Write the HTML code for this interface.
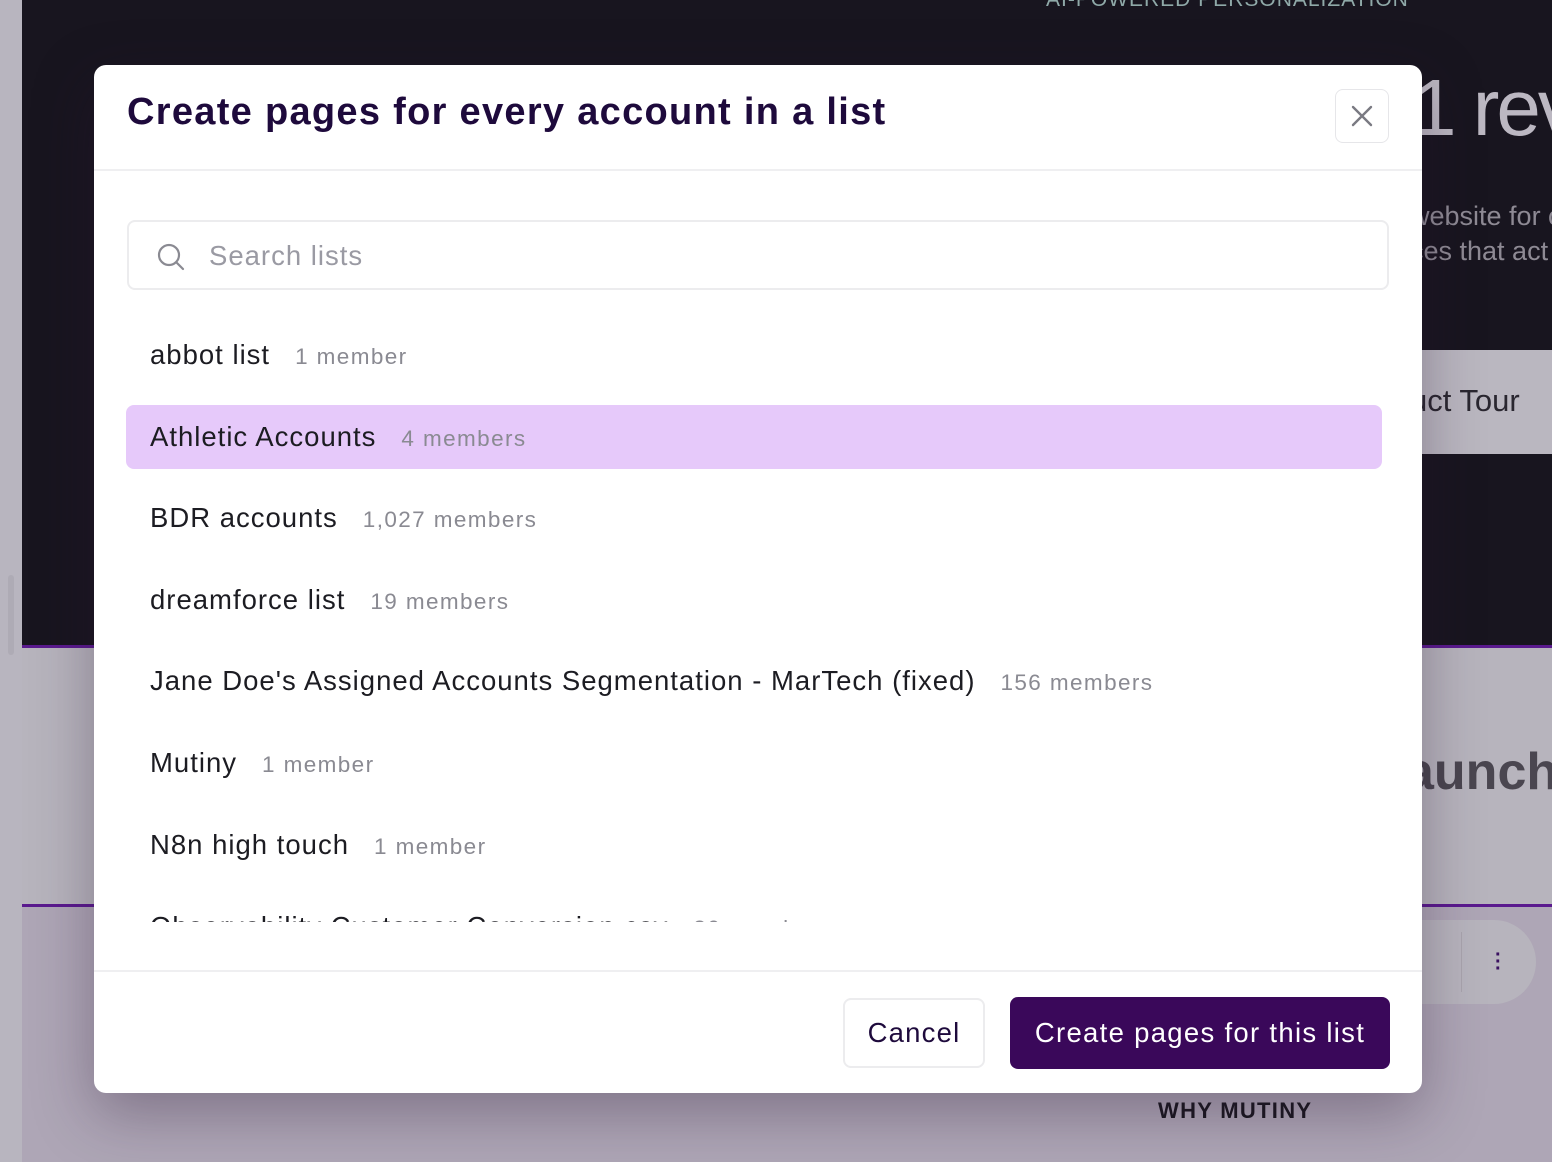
<!DOCTYPE html>
<html><head><meta charset="utf-8"><style>
*{box-sizing:border-box;margin:0;padding:0}
body{width:1552px;height:1162px;overflow:hidden;position:relative;font-family:"Liberation Sans",sans-serif;background:#aea6b6}
.abs{position:absolute;white-space:nowrap}
.l{letter-spacing:1px;font-size:27.5px}
.l span{color:#8a8a92;font-size:22.5px;margin-left:25px;letter-spacing:1.4px}
</style></head><body>
<div class="abs" style="left:0;top:0;width:22px;height:1162px;background:#b8b5bf"></div>
<div class="abs" style="left:8px;top:575px;width:6px;height:80px;background:#aeabb5;border-radius:3px"></div>
<div class="abs" style="left:22px;top:0;width:1530px;height:646px;background:#18151f"></div>
<div class="abs" style="left:1046px;top:-12px;color:#8fa9a8;font-size:21px;letter-spacing:1px">AI-POWERED PERSONALIZATION</div>
<div class="abs" style="left:1412px;top:62px;color:#bcb8c2;font-size:80px;letter-spacing:-3px">1 rev</div>
<div class="abs" style="left:1410px;top:199px;color:#8e8a94;font-size:27px;line-height:35px">website for c<br>ces that act</div>
<div class="abs" style="left:1400px;top:350px;width:152px;height:104px;background:#bab7c0"></div>
<div class="abs" style="left:1410px;top:383px;color:#2a2730;font-size:31px">uct Tour</div>
<div class="abs" style="left:22px;top:645px;width:1530px;height:3px;background:#5a1a8e"></div>
<div class="abs" style="left:22px;top:648px;width:1530px;height:256px;background:#b7b4bd"></div>
<div class="abs" style="left:1405px;top:742px;color:#4a4650;font-size:52px;font-weight:bold">aunch</div>
<div class="abs" style="left:22px;top:904px;width:1530px;height:3px;background:#5a1a8e"></div>
<div class="abs" style="left:1380px;top:920px;width:156px;height:84px;background:#b7b4bd;border-radius:42px"></div>
<div class="abs" style="left:1461px;top:932px;width:1px;height:60px;background:#a8a4ad"></div>
<div class="abs" style="left:1495px;top:952px;width:5px;height:22px;color:#3a1060;font-size:20px;line-height:7px;font-weight:bold">·<br>·<br>·</div>
<div class="abs" style="left:1158px;top:1098px;color:#1a1820;font-size:22px;font-weight:bold;letter-spacing:1.3px">WHY MUTINY</div>

<div class="abs" style="left:94px;top:65px;width:1328px;height:1028px;background:#fff;border-radius:12px;box-shadow:0 20px 60px rgba(40,20,50,.35);overflow:hidden">
  <div class="abs" style="left:33px;top:26px;color:#1e0a3c;font-size:38px;font-weight:bold;letter-spacing:1.3px">Create pages for every account in a list</div>
  <div class="abs" style="left:1241px;top:24px;width:54px;height:54px;border:1px solid #e6e6e9;border-radius:8px">
    <svg width="52" height="52" viewBox="0 0 52 52"><path d="M17 17L35 35M35 17L17 35" stroke="#7a7a82" stroke-width="2.4" stroke-linecap="round"/></svg>
  </div>
  <div class="abs" style="left:0;top:104px;width:1328px;height:2px;background:#efeff1"></div>
  <div class="abs" style="left:33px;top:155px;width:1262px;height:70px;border:2px solid #ececee;border-radius:8px">
    <svg class="abs" style="left:26px;top:19px" width="32" height="32" viewBox="0 0 32 32"><circle cx="14" cy="14" r="10" fill="none" stroke="#8a8a92" stroke-width="2.2"/><path d="M21.5 21.5L28 28" stroke="#8a8a92" stroke-width="2.2" stroke-linecap="round"/></svg>
    <div class="abs" style="left:80px;top:18px;color:#9a9aa3;font-size:27.5px;letter-spacing:1px">Search lists</div>
  </div>
  <div class="abs" style="left:32px;top:340px;width:1256px;height:64px;background:#e6c9fa;border-radius:8px"></div>
  <div class="abs" style="left:0;top:250px;width:1328px;height:607px;overflow:hidden;color:#1c1c22">
    <div class="abs l" style="left:56px;top:24px">abbot list<span>1 member</span></div>
    <div class="abs l" style="left:56px;top:106px">Athletic Accounts<span>4 members</span></div>
    <div class="abs l" style="left:56px;top:187px">BDR accounts<span>1,027 members</span></div>
    <div class="abs l" style="left:56px;top:269px">dreamforce list<span>19 members</span></div>
    <div class="abs l" style="left:56px;top:350px">Jane Doe's Assigned Accounts Segmentation - MarTech (fixed)<span>156 members</span></div>
    <div class="abs l" style="left:56px;top:432px">Mutiny<span>1 member</span></div>
    <div class="abs l" style="left:56px;top:514px">N8n high touch<span>1 member</span></div>
    <div class="abs l" style="left:56px;top:596px">Observability Customer Conversion.csv<span>80 members</span></div>
  </div>
  <div class="abs" style="left:0;top:905px;width:1328px;height:2px;background:#efeff1"></div>
  <div class="abs" style="left:749px;top:933px;width:142px;height:70px;border:2px solid #ececee;border-radius:8px;color:#1e0a3c;font-size:27.5px;letter-spacing:1.2px;text-align:center;line-height:66px">Cancel</div>
  <div class="abs" style="left:916px;top:932px;width:380px;height:72px;background:#3a085a;border-radius:8px;color:#fff;font-size:27.5px;letter-spacing:1.3px;text-align:center;line-height:72px">Create pages for this list</div>
</div>
</body></html>
